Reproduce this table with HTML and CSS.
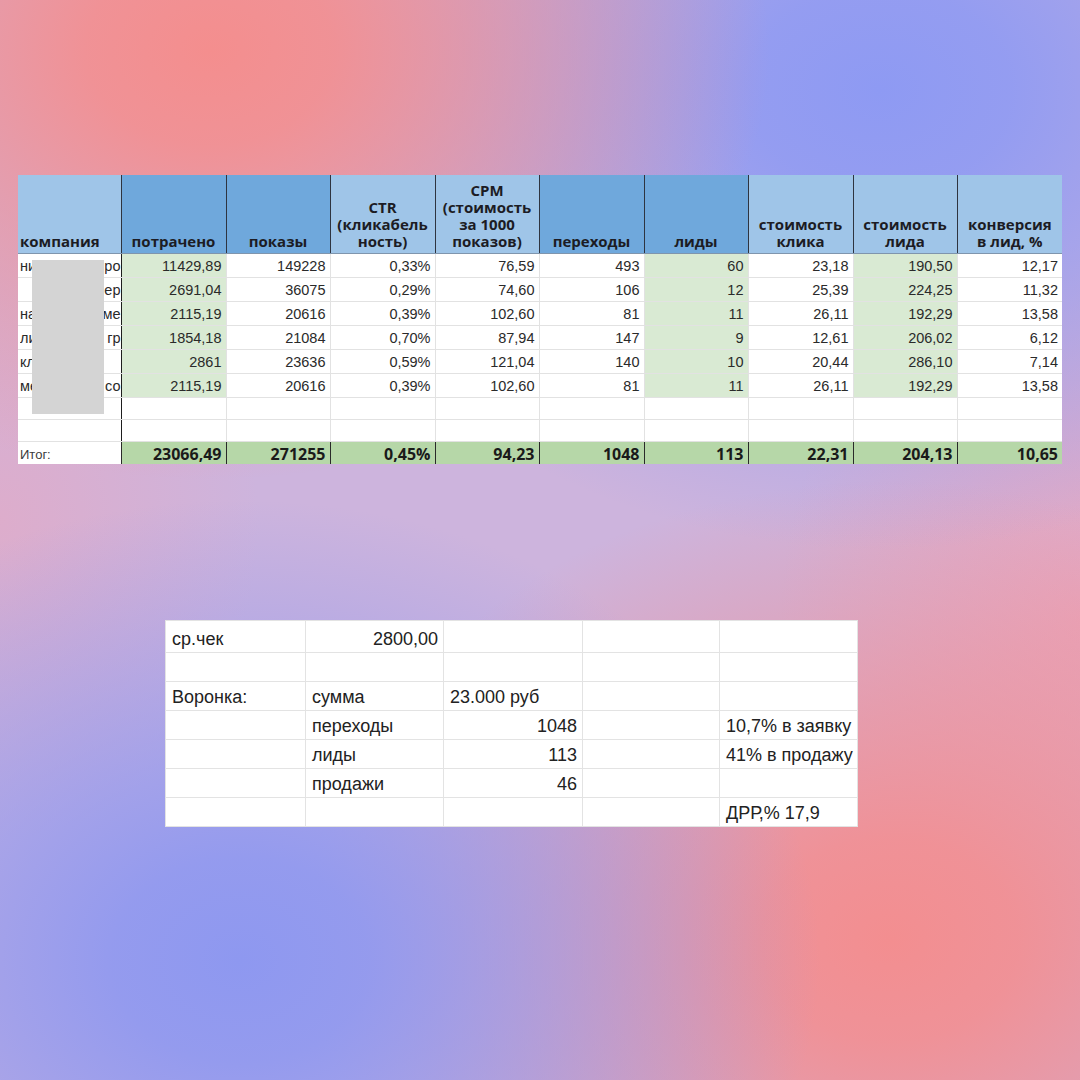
FILE: index.html
```html
<!DOCTYPE html>
<html lang="ru">
<head>
<meta charset="utf-8">
<title>Отчёт</title>
<link rel="stylesheet" href="styles.css">
</head>
<body>
<div class="page">
  <div class="sheet">
    <table class="report">
      <colgroup>
        <col class="c-name"><col class="c-w"><col class="c-n"><col class="c-w"><col class="c-n"><col class="c-w"><col class="c-n"><col class="c-w"><col class="c-n"><col class="c-w">
      </colgroup>
      <thead>
        <tr class="head">
          <th class="hl left">компания</th>
          <th class="hd">потрачено</th>
          <th class="hd">показы</th>
          <th class="hl">CTR<br>(кликабель<br>ность)</th>
          <th class="hl">CPM<br>(стоимость<br>за 1000<br>показов)</th>
          <th class="hd">переходы</th>
          <th class="hd">лиды</th>
          <th class="hl">стоимость<br>клика</th>
          <th class="hl">стоимость<br>лида</th>
          <th class="hl">конверсия<br>в лид, %</th>
        </tr>
      </thead>
      <tbody>
        <tr class="row">
          <td class="name"><div class="nm"><span>ни</span><span>ро</span></div></td>
          <td class="g">11429,89</td><td>149228</td><td>0,33%</td><td>76,59</td><td>493</td><td class="g">60</td><td>23,18</td><td class="g">190,50</td><td>12,17</td>
        </tr>
        <tr class="row">
          <td class="name"><div class="nm"><span></span><span>ер</span></div></td>
          <td class="g">2691,04</td><td>36075</td><td>0,29%</td><td>74,60</td><td>106</td><td class="g">12</td><td>25,39</td><td class="g">224,25</td><td>11,32</td>
        </tr>
        <tr class="row">
          <td class="name"><div class="nm"><span>на</span><span>ме</span></div></td>
          <td class="g">2115,19</td><td>20616</td><td>0,39%</td><td>102,60</td><td>81</td><td class="g">11</td><td>26,11</td><td class="g">192,29</td><td>13,58</td>
        </tr>
        <tr class="row">
          <td class="name"><div class="nm"><span>ли</span><span>о гр</span></div></td>
          <td class="g">1854,18</td><td>21084</td><td>0,70%</td><td>87,94</td><td>147</td><td class="g">9</td><td>12,61</td><td class="g">206,02</td><td>6,12</td>
        </tr>
        <tr class="row">
          <td class="name"><div class="nm"><span>кл</span><span></span></div></td>
          <td class="g">2861</td><td>23636</td><td>0,59%</td><td>121,04</td><td>140</td><td class="g">10</td><td>20,44</td><td class="g">286,10</td><td>7,14</td>
        </tr>
        <tr class="row">
          <td class="name"><div class="nm"><span>ме</span><span>а со</span></div></td>
          <td class="g">2115,19</td><td>20616</td><td>0,39%</td><td>102,60</td><td>81</td><td class="g">11</td><td>26,11</td><td class="g">192,29</td><td>13,58</td>
        </tr>
        <tr class="empty">
          <td class="name"></td><td></td><td></td><td></td><td></td><td></td><td></td><td></td><td></td><td></td>
        </tr>
        <tr class="empty">
          <td class="name"></td><td></td><td></td><td></td><td></td><td></td><td></td><td></td><td></td><td></td>
        </tr>
        <tr class="total">
          <td class="name label">Итог:</td>
          <td>23066,49</td><td>271255</td><td>0,45%</td><td>94,23</td><td>1048</td><td>113</td><td>22,31</td><td>204,13</td><td>10,65</td>
        </tr>
      </tbody>
    </table>
    <div class="redact"></div>
  </div>

  <table class="funnel">
    <colgroup>
      <col class="f1"><col class="f2"><col class="f3"><col class="f4"><col class="f5">
    </colgroup>
    <tbody>
      <tr class="first"><td>ср.чек</td><td class="r">2800,00</td><td></td><td></td><td></td></tr>
      <tr><td></td><td></td><td></td><td></td><td></td></tr>
      <tr><td>Воронка:</td><td>сумма</td><td>23.000 руб</td><td></td><td></td></tr>
      <tr><td></td><td>переходы</td><td class="r">1048</td><td></td><td>10,7% в заявку</td></tr>
      <tr><td></td><td>лиды</td><td class="r">113</td><td></td><td>41% в продажу</td></tr>
      <tr><td></td><td>продажи</td><td class="r">46</td><td></td><td></td></tr>
      <tr><td></td><td></td><td></td><td></td><td>ДРР,% 17,9</td></tr>
    </tbody>
  </table>
</div>
</body>
</html>
```

FILE: styles.css
```css
html, body {
  margin: 0;
  padding: 0;
}

body {
  width: 1080px;
  height: 1080px;
  overflow: hidden;
  font-family: "Liberation Sans", Arial, sans-serif;
  background:
    radial-gradient(ellipse 560px 430px at 210px 50px, rgba(244, 142, 142, 1) 0%, rgba(244, 142, 142, 0.9) 22%, rgba(244, 142, 142, 0) 100%),
    radial-gradient(ellipse 600px 460px at 880px 90px, rgba(142, 154, 243, 1) 0%, rgba(142, 154, 243, 0.9) 22%, rgba(142, 154, 243, 0) 100%),
    radial-gradient(ellipse 580px 460px at 240px 960px, rgba(142, 152, 240, 1) 0%, rgba(142, 152, 240, 0.9) 22%, rgba(142, 152, 240, 0) 100%),
    radial-gradient(ellipse 580px 460px at 890px 940px, rgba(243, 142, 144, 1) 0%, rgba(243, 142, 144, 0.9) 22%, rgba(243, 142, 144, 0) 100%),
    radial-gradient(ellipse 300px 380px at 1080px 620px, rgba(240, 160, 178, 0.7), rgba(240, 160, 178, 0) 100%),
    radial-gradient(ellipse 260px 320px at 0px 520px, rgba(232, 168, 192, 0.6), rgba(232, 168, 192, 0) 100%),
    #cdb4dd;
}

.page {
  width: 1080px;
  height: 1080px;
  padding-top: 175px;
  box-sizing: border-box;
}

.sheet {
  position: relative;
  margin-left: 18px;
  width: 1044px;
}

.report {
  border-collapse: collapse;
  table-layout: fixed;
  width: 1044px;
  color: #1f1f1f;
}

.c-name { width: 103px; }
.c-w { width: 105px; }
.c-n { width: 104px; }

.report th {
  font-family: "Open Sans", "Noto Sans", sans-serif;
  font-weight: 700;
  font-size: 15px;
  line-height: 17px;
  color: #1c1c24;
  text-align: center;
  vertical-align: bottom;
  padding: 0 2px 3px;
  border-left: 1px solid #2e3440;
  border-right: 1px solid #2e3440;
  border-bottom: 1px solid #7f95ad;
}

.report th.left {
  text-align: left;
  border-left: none;
}

.report th:last-child {
  border-right: none;
}

.hl { background: #9fc5e8; }
.hd { background: #6fa8dc; }

.head { height: 78px; }

.report td {
  font-size: 14.5px;
  line-height: 17px;
  color: #2a2a2a;
  text-align: right;
  vertical-align: bottom;
  padding: 0 4px 2px 2px;
  background: #ffffff;
  border: 1px solid #e2e2e2;
  white-space: nowrap;
  overflow: hidden;
}

.report td.g { background: #d9ead3; }

.report td.name {
  text-align: left;
  padding: 0 0 2px 2px;
  border-left: none;
  border-right: 1px solid #1e1e1e;
}

.report td:last-child { border-right: none; }

.nm {
  display: flex;
  justify-content: space-between;
  white-space: nowrap;
  overflow: hidden;
}

.row { height: 24px; }
.empty { height: 22px; }

.total { height: 23px; }

.report .total td {
  background: #b6d7a8;
  font-family: "Open Sans", "Noto Sans", sans-serif;
  font-weight: 700;
  font-size: 16px;
  color: #1a1a1a;
  border-top: 1px solid #1e1e1e;
  border-left: 1px solid #2a2a2a;
  border-right: 1px solid #2a2a2a;
  border-bottom: none;
  padding-bottom: 1px;
}

.report .total td.label {
  background: #ffffff;
  font-family: "Liberation Sans", Arial, sans-serif;
  font-weight: 400;
  font-size: 13px;
  color: #3a3a3a;
  border-left: none;
}

.report .total td:last-child { border-right: none; }

.redact {
  position: absolute;
  left: 14px;
  top: 85px;
  width: 72px;
  height: 154px;
  background: #d4d4d4;
}

.funnel {
  margin-top: 156px;
  margin-left: 165px;
  width: 692px;
  border-collapse: collapse;
  table-layout: fixed;
  background: #ffffff;
}

.f1 { width: 140px; }
.f2 { width: 138px; }
.f3 { width: 139px; }
.f4 { width: 137px; }
.f5 { width: 138px; }

.funnel tr { height: 29px; }
.funnel tr.first { height: 32px; }

.funnel td {
  font-size: 18px;
  line-height: 21px;
  color: #222222;
  text-align: left;
  vertical-align: bottom;
  padding: 0 5px 2px 6px;
  border: 1px solid #e3e3e3;
  white-space: nowrap;
  overflow: hidden;
}

.funnel td.r { text-align: right; }
```
